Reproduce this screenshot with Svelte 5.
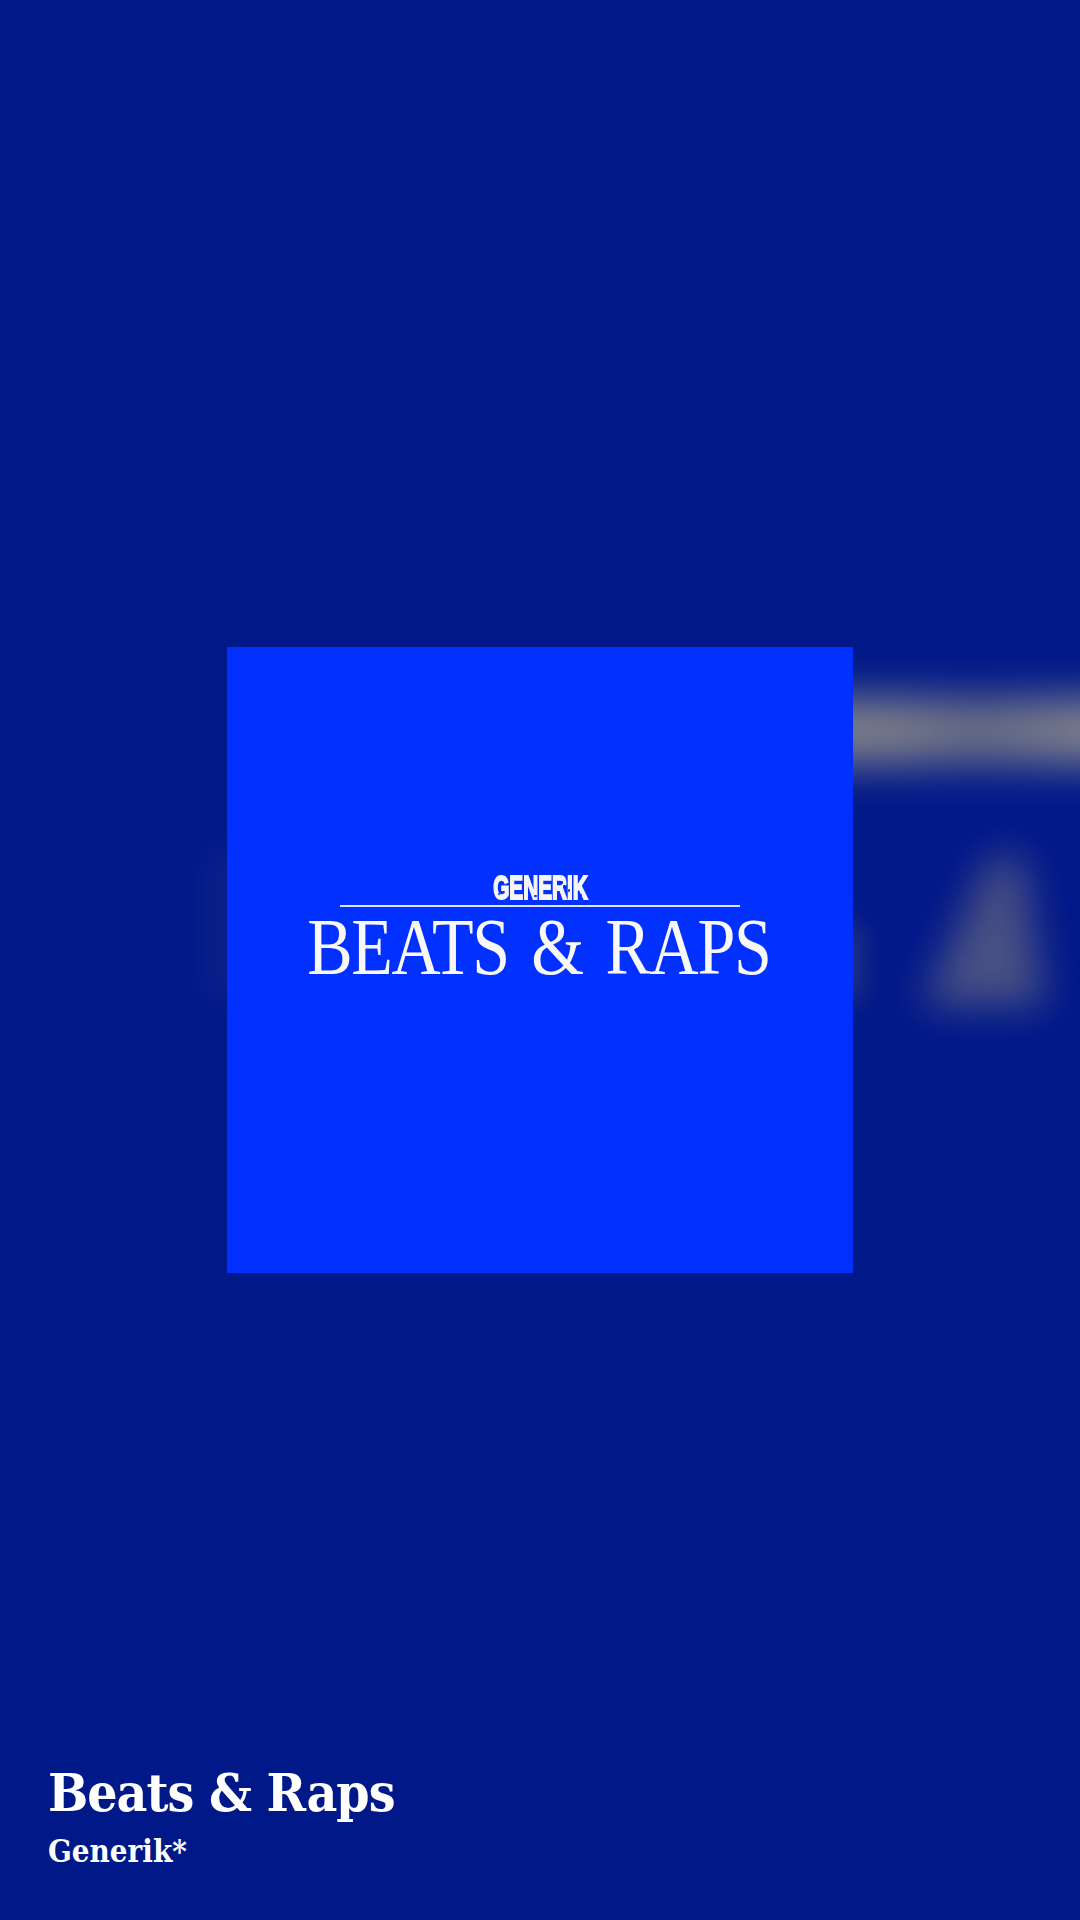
<script>
  const specks = [
    { x: 66, y: 6, w: 5, h: 3 },
    { x: 71, y: 10, w: 3, h: 4 },
    { x: 76, y: 14, w: 2, h: 3 },
    { x: 86, y: 19, w: 4, h: 2 },
    { x: 6, y: 18, w: 2, h: 2 },
    { x: 42, y: 20, w: 3, h: 2 }
  ];
</script>

<main class="screen">
  <div class="backdrop" aria-hidden="true">
    <div class="smear"></div>
    <svg class="ghost" viewBox="0 0 180 200" width="180" height="200">
      <path d="M96 18 L128 18 L150 168 L26 168 Z" fill="#c8b478" />
    </svg>
    <div class="sliver"></div>
    <div class="sliver left"></div>
  </div>

  <div class="art">
    <div class="brand">
      <span class="brand-text">GENERIK</span>
      {#each specks as s}
        <i class="speck" style="left:{s.x}px;top:{s.y}px;width:{s.w}px;height:{s.h}px"></i>
      {/each}
    </div>
    <div class="rule"></div>
    <div class="art-title">BEATS &amp; RAPS</div>
  </div>

  <footer class="meta">
    <h1>Beats &amp; Raps</h1>
    <h2>Generik*</h2>
  </footer>
</main>

<style>
  :global(body) {
    margin: 0;
    background: #011889;
  }

  .screen {
    position: relative;
    width: 1080px;
    height: 1920px;
    overflow: hidden;
    background: #011889;
    display: grid;
    grid-template-rows: 647px 626px 647px;
    justify-items: center;
    font-family: "DejaVu Serif Condensed", "DejaVu Serif", serif;
    color: #fff;
  }

  .backdrop {
    position: absolute;
    inset: 0;
  }

  .smear {
    position: absolute;
    left: 800px;
    top: 698px;
    width: 340px;
    height: 66px;
    background: linear-gradient(90deg, #d6c887 0%, #d6c887 25%, #b0a880 52%, #dccf8e 88%);
    opacity: 0.6;
    filter: blur(22px);
  }

  .ghost {
    position: absolute;
    left: 895px;
    top: 838px;
    opacity: 0.36;
    filter: blur(20px);
  }

  .sliver {
    position: absolute;
    left: 815px;
    top: 925px;
    width: 46px;
    height: 75px;
    background: #c8b478;
    opacity: 0.2;
    filter: blur(14px);
  }

  .sliver.left {
    left: 208px;
    top: 850px;
    width: 24px;
    height: 150px;
    opacity: 0.07;
  }

  .art {
    grid-row: 2;
    position: relative;
    width: 626px;
    height: 626px;
    background: #0230ff;
    display: flex;
    flex-direction: column;
    align-items: center;
    padding-top: 228px;
    box-sizing: border-box;
  }

  .brand {
    position: relative;
    width: 96px;
    height: 25px;
    display: flex;
    justify-content: center;
    align-items: center;
  }

  .brand-text {
    display: block;
    font-family: "Liberation Sans", sans-serif;
    font-weight: 700;
    font-size: 34px;
    line-height: 25px;
    white-space: nowrap;
    color: #f6f6f6;
    -webkit-text-stroke: 2px #f6f6f6;
    transform: scaleX(0.61);
  }

  .speck {
    position: absolute;
    background: #0230ff;
    border-radius: 1px;
  }

  .rule {
    width: 400px;
    height: 1.5px;
    margin-top: 5px;
    background: #dfe5ff;
  }

  .art-title {
    margin-top: 7px;
    margin-left: -3px;
    font-family: "Liberation Serif", serif;
    font-size: 81px;
    line-height: 66px;
    white-space: nowrap;
    letter-spacing: -1.5px;
    word-spacing: 8px;
    color: #f8f8f6;
    transform: scaleX(0.84);
  }

  .meta {
    grid-row: 3;
    justify-self: start;
    align-self: end;
    padding: 0 0 50px 48px;
  }

  h1 {
    margin: 0 0 6px;
    font-size: 53px;
    line-height: 68px;
    font-weight: 700;
    letter-spacing: -1px;
  }

  h2 {
    margin: 0;
    font-size: 31px;
    line-height: 38px;
    font-weight: 700;
  }
</style>
